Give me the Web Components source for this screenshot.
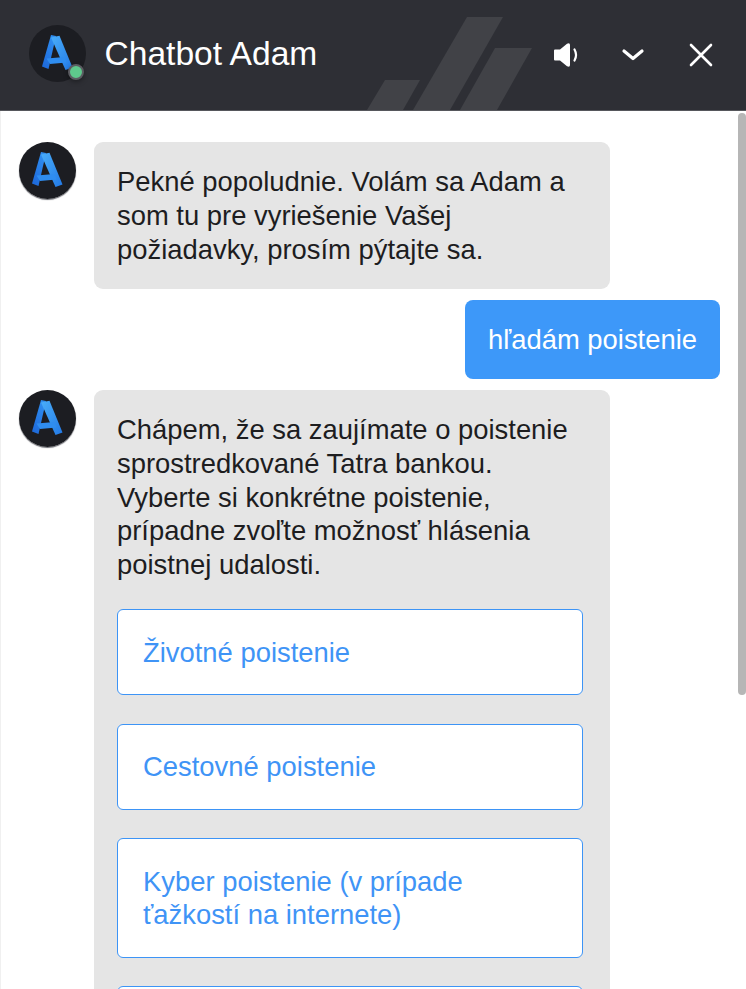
<!DOCTYPE html>
<html lang="sk"><head><meta charset="utf-8"><title>Chatbot Adam</title>
<style>html,body{margin:0;padding:0;background:#fff;height:100%;overflow:hidden}</style>
</head><body>
<chat-window>
  <chat-header slot="header">Chatbot Adam</chat-header>
  <bot-message>Pekné popoludnie. Volám sa Adam a som tu pre vyriešenie Vašej požiadavky, prosím pýtajte sa.</bot-message>
  <user-message>hľadám poistenie</user-message>
  <bot-message options>Chápem, že sa zaujímate o poistenie sprostredkované Tatra bankou. Vyberte si konkrétne poistenie, prípadne zvoľte možnosť hlásenia poistnej udalosti.
    <div slot="options">
      <option-button>Životné poistenie</option-button>
      <option-button>Cestovné poistenie</option-button>
      <option-button>Kyber poistenie (v prípade ťažkostí na internete)</option-button>
      <option-button></option-button>
    </div>
  </bot-message>
</chat-window>
<script>
const LOGO = `<svg viewBox="0 0 57 57" width="57" height="57" aria-hidden="true" style="display:block">
<defs><linearGradient id="l" x1="0" y1="1" x2="0.5" y2="0"><stop offset="0" stop-color="#1c66d8"/><stop offset="1" stop-color="#2e8cf0"/></linearGradient>
<linearGradient id="r" x1="0" y1="0" x2="1" y2="1"><stop offset="0" stop-color="#4aaefa"/><stop offset="1" stop-color="#2279e6"/></linearGradient></defs>
<circle cx="28.5" cy="28.5" r="28.5" fill="#1c1d22"/>
<polygon points="22,10 27,11 19.5,44 13,41.5" fill="url(#l)"/>
<polygon points="22,12.5 30.5,10.7 43.5,42.5 36.5,45" fill="url(#r)"/>
<polygon points="17.5,33.5 35.5,32 37.5,37.5 21,39" fill="#2f8df0"/></svg>`;
function def(name, html){
  customElements.define(name, class extends HTMLElement{
    constructor(){super();this.attachShadow({mode:'open'}).innerHTML=html;}
  });
}
def('chat-window',`<style>
:host{display:flex;flex-direction:column;position:relative;height:989px;width:746px;overflow:hidden;box-sizing:border-box;
  font-family:"Liberation Sans",Arial,sans-serif;font-size:27.4px;line-height:33.75px;color:#1d1d1f;background:#fff}
.log{flex:1;min-height:0;overflow:hidden;display:flex;flex-direction:column;gap:11px;padding:31px 26px 0 18px;border-left:1px solid #f0f0f0;box-sizing:border-box}
.bar{position:absolute;right:0;top:113px;width:8px;height:582px;border-radius:4px;background:#b6b6b6}
</style><slot name="header"></slot><div class="log"><slot></slot></div><div class="bar"></div>`);
def('chat-header',`<style>
:host{display:flex;align-items:center;flex:none;position:relative;height:111px;box-sizing:border-box;border-bottom:1px solid #56575c;background:#2e2f35;color:#fff;padding:0 33px 0 29px;overflow:hidden}
.deco{position:absolute;left:0;top:0}
.av{position:relative;width:57px;height:57px;flex:none;margin-top:-3px}
.dot{position:absolute;left:39px;top:39px;width:12px;height:12px;border-radius:50%;background:#5ec88c;border:2.5px solid #5b5c62;box-shadow:0 2px 5px rgba(0,0,0,.35)}
.title{position:relative;margin:-3px 0 0 18.5px;flex:1;font-size:33.6px;line-height:40px}
.actions{position:relative;display:flex;align-items:center}
.chev{margin:0 44px 0 40px}
svg{display:block}
</style>
<svg class="deco" width="746" height="110" aria-hidden="true"><g fill="#414247"><polygon points="385,80 420,80 403,110 367,110"/><polygon points="467,17 503,17 450,110 413,110"/><polygon points="495,48 532,48 497,110 460,110"/></g></svg>
<div class="av">${LOGO}<div class="dot"></div></div>
<div class="title"><slot></slot></div>
<div class="actions">
<svg width="27" height="24" viewBox="0 0 27 24" aria-hidden="true"><path d="M0 7.5Q0 6.5 1 6.5H6L13 .8Q16 -.6 16 2V22Q16 24.6 13 23.2L6 17.5H1Q0 17.5 0 16.5Z" fill="#fff"/><path d="M20.5 6.5Q23.6 12 20.5 17.5" fill="none" stroke="#fff" stroke-width="2.2" stroke-linecap="round"/></svg>
<svg class="chev" width="24" height="14" viewBox="0 0 24 14" aria-hidden="true"><path d="M3 3L12 10.5 21 3" fill="none" stroke="#fff" stroke-width="3.2" stroke-linecap="round" stroke-linejoin="round"/></svg>
<svg width="24" height="24" viewBox="0 0 24 24" aria-hidden="true"><path d="M2 2L22 22M22 2L2 22" fill="none" stroke="#fff" stroke-width="2.6" stroke-linecap="round"/></svg>
</div>`);
def('bot-message',`<style>
:host{display:flex;gap:18px;align-items:flex-start}
.av{flex:none;width:57px;height:57px;border-radius:50%;box-shadow:0 1px 1px #6a6b72}
.b{width:516px;box-sizing:border-box;background:#e5e5e5;border-radius:9px;padding:23px 27px 23px 23px}
.opts{display:none;margin-top:27.25px}
:host([options]) .opts{display:block}
</style><div class="av">${LOGO}</div><div class="b"><slot></slot><div class="opts"><slot name="options"></slot></div></div>`);
def('user-message',`<style>
:host{display:flex;justify-content:flex-end}
.b{background:#3d98f9;color:#fff;border-radius:8px;padding:22.5px 23px}
</style><div class="b"><slot></slot></div>`);
def('option-button',`<style>
:host{display:block;box-sizing:border-box;min-height:86px;border:1px solid #3d94f6;border-radius:6px;background:#fff;color:#3f94f6;padding:25.5px 25px 24.5px;margin-bottom:28.6px}
</style><slot></slot>`);
</script>
</body></html>
